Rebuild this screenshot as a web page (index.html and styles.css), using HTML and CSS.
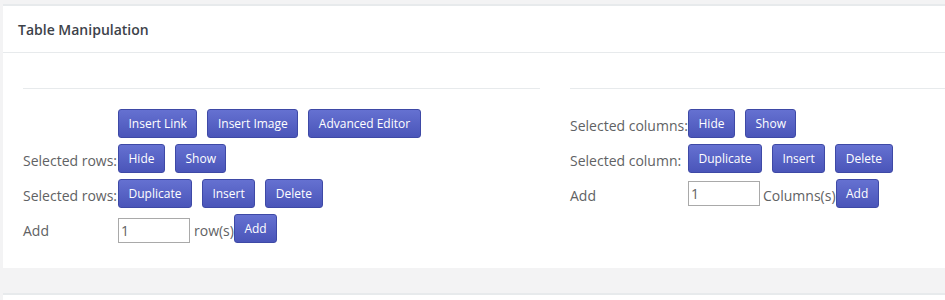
FILE: index.html
```html
<!DOCTYPE html>
<html lang="en">
<head>
  <meta charset="UTF-8">
  <meta name="viewport" content="width=device-width, initial-scale=1.0">
  <title>Table Manipulation</title>
  <link rel="stylesheet" href="styles.css">
</head>
<body>
  <div class="ibox">
    <div class="ibox-title">
      <h5>Table Manipulation</h5>
    </div>
    <div class="ibox-content">
      <div class="col col-rows">
        <div class="divider"></div>
        <div class="row">
          <span class="label"></span>
          <button type="button" class="btn">Insert Link</button>
          <button type="button" class="btn">Insert Image</button>
          <button type="button" class="btn">Advanced Editor</button>
        </div>
        <div class="row">
          <span class="label">Selected rows:</span>
          <button type="button" class="btn">Hide</button>
          <button type="button" class="btn">Show</button>
        </div>
        <div class="row">
          <span class="label">Selected rows:</span>
          <button type="button" class="btn">Duplicate</button>
          <button type="button" class="btn">Insert</button>
          <button type="button" class="btn">Delete</button>
        </div>
        <div class="row">
          <span class="label">Add</span>
          <input type="text" class="count" value="1">
          <span class="unit">row(s)</span>
          <button type="button" class="btn">Add</button>
        </div>
      </div>

      <div class="col col-columns">
        <div class="divider"></div>
        <div class="row">
          <span class="label">Selected columns:</span>
          <button type="button" class="btn">Hide</button>
          <button type="button" class="btn">Show</button>
        </div>
        <div class="row">
          <span class="label">Selected column:</span>
          <button type="button" class="btn">Duplicate</button>
          <button type="button" class="btn">Insert</button>
          <button type="button" class="btn">Delete</button>
        </div>
        <div class="row">
          <span class="label">Add</span>
          <input type="text" class="count" value="1">
          <span class="unit">Columns(s)</span>
          <button type="button" class="btn">Add</button>
        </div>
      </div>
    </div>
  </div>

  <div class="ibox ibox-next">
    <div class="ibox-title"></div>
  </div>
</body>
</html>
```

FILE: styles.css
```css
html {
  overflow: hidden;
}
body {
  margin: 0;
  padding: 4px 0 0 3px;
  background-color: #f3f3f4;
  font-family: "Open Sans", "Noto Sans", sans-serif;
  font-size: 14px;
  color: #5f6264;
}
.ibox {
  width: 1104px;
  background-color: #fff;
  border-top: 2px solid #e7eaec;
}
.ibox-next {
  margin-top: 25px;
}
.ibox-title {
  height: 46px;
  padding: 0 15px;
  display: flex;
  align-items: center;
  border-bottom: 1px solid #e7eaec;
}
.ibox-title h5 {
  margin: 0;
  font-size: 14px;
  font-weight: 600;
  color: #3d4249;
}
.ibox-content {
  display: flex;
  gap: 30px;
  padding: 35px 20px 25px;
}
.col {
  width: 517px;
}
.divider {
  border-top: 1px solid #e7eaec;
  margin-bottom: 20px;
}
.row {
  display: flex;
  align-items: center;
  height: 29px;
  margin-bottom: 6px;
}
.row:last-child {
  margin-bottom: 0;
}
.label {
  flex: none;
  white-space: nowrap;
  padding-top: 4px;
}
.col-rows .label {
  width: 95px;
}
.col-columns .label {
  width: 118px;
}
.btn {
  font-family: "Open Sans", "Noto Sans", sans-serif;
  font-size: 12px;
  font-weight: 500;
  line-height: 15px;
  color: #fff;
  padding: 6px 9.5px;
  margin-right: 10px;
  border: 1px solid #3e49a6;
  border-radius: 3px;
  background: linear-gradient(#6571d1, #4a55b9);
  cursor: pointer;
}
.count {
  box-sizing: border-box;
  width: 72px;
  height: 25px;
  padding: 0 2px;
  margin: 3px 0 0;
  border: 1px solid #a9a9a9;
  font-family: "Open Sans", "Noto Sans", sans-serif;
  font-size: 14px;
  color: #5f6264;
}
.col-columns .count {
  margin-top: 0;
}
.unit {
  padding: 4px 0 0 4px;
  white-space: nowrap;
}
.col-columns .unit {
  padding-left: 3px;
}
```
